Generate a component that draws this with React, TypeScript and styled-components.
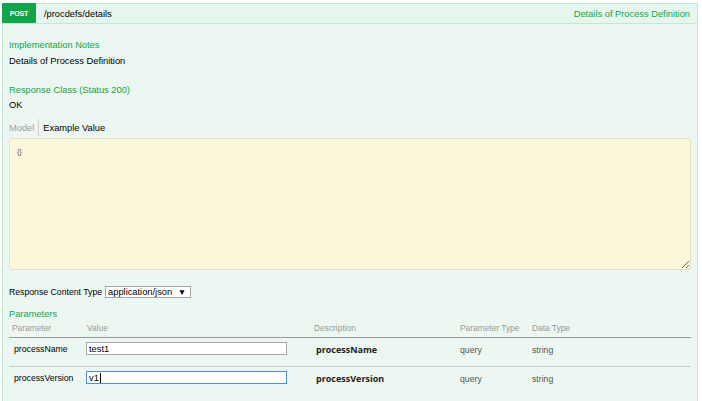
import styled, { createGlobalStyle } from "styled-components";

const GlobalStyle = createGlobalStyle`
  body {
    margin: 0;
    background: #ffffff;
    font-family: "Liberation Sans", Arial, sans-serif;
  }
`;

const Operation = styled.div`
  margin: 3px 4px 0 2px;
  width: 696px;
`;

const Heading = styled.div`
  display: flex;
  align-items: center;
  height: 19px;
  background: #e7f6ec;
  border: 1px solid #c3e8d1;
  border-left: none;
`;

const Method = styled.span`
  display: flex;
  align-items: center;
  justify-content: center;
  align-self: stretch;
  width: 34px;
  margin-top: -1px;
  background: #10a54a;
  color: #ffffff;
  font-size: 7px;
  font-weight: bold;
  letter-spacing: -0.2px;
  border-radius: 1px;
`;

const Path = styled.span`
  margin-left: 8px;
  font-size: 9.3px;
  color: #000000;
`;

const Summary = styled.span`
  margin-left: auto;
  margin-right: 7px;
  font-size: 9.3px;
  color: #10a54a;
`;

const Content = styled.div`
  background: #ebf7f0;
  border: 1px solid #c3e8d1;
  border-top: none;
  padding: 15px 6px 20px 6px;
  font-size: 9.3px;
  line-height: 12px;
  color: #000000;
`;

const SectionTitle = styled.h4<{ $top?: number; $bottom?: number }>`
  margin: ${(p) => p.$top ?? 0}px 0 ${(p) => p.$bottom ?? 4}px;
  font-size: 9.3px;
  line-height: 12px;
  font-weight: normal;
  color: #10a54a;
`;

const Text = styled.p`
  margin: 0;
`;

const Tabs = styled.div`
  display: flex;
  align-items: center;
  margin-top: 8px;
  height: 17px;
`;

const Tab = styled.span<{ $active?: boolean }>`
  display: flex;
  align-items: center;
  align-self: stretch;
  padding: 0 4px 0 0;
  color: ${(p) => (p.$active ? "#000000" : "#a0a0a0")};
  & + & {
    border-left: 1px solid #d0d0d0;
    padding-left: 4px;
  }
`;

const Sample = styled.textarea`
  display: block;
  box-sizing: border-box;
  width: 100%;
  height: 132px;
  margin-top: 2px;
  padding: 8px 7px;
  background: #fcf6db;
  border: 1px solid #e5e0c6;
  border-radius: 3px;
  font-family: "Liberation Sans", Arial, sans-serif;
  font-size: 8px;
  letter-spacing: -0.5px;
  color: #6b6b8a;
  outline: none;
`;

const ContentType = styled.div`
  display: flex;
  align-items: center;
  margin-top: 14px;
  height: 16px;
  font-size: 8.7px;
`;

const SelectBox = styled.span`
  display: inline-flex;
  align-items: center;
  justify-content: space-between;
  box-sizing: border-box;
  width: 86px;
  height: 12px;
  margin-left: 3px;
  padding: 0 4px 0 2px;
  background: #ffffff;
  border: 1px solid #a6a6a6;
  font-size: 9.3px;
  color: #000000;
`;

const Arrow = styled.span`
  font-size: 8.5px;
`;

const Table = styled.table`
  width: 100%;
  border-collapse: collapse;
  table-layout: fixed;
`;

const Th = styled.th`
  padding: 3px 0 3px 3px;
  text-align: left;
  font-weight: normal;
  font-size: 8.4px;
  line-height: 11px;
  color: #999999;
  border-bottom: 1px solid #999999;
`;

const Row = styled.tr<{ $last?: boolean }>`
  border-bottom: ${(p) => (p.$last ? "none" : "1px solid #cccccc")};
`;

const Td = styled.td<{ $pad?: number; $small?: boolean }>`
  box-sizing: border-box;
  height: 29px;
  padding: ${(p) => (p.$small ? 6 : 4)}px 0 0 ${(p) => p.$pad ?? 3}px;
  vertical-align: top;
  font-size: 8.7px;
  line-height: 12px;
  color: ${(p) => (p.$small ? "#555555" : "#000000")};
`;

const Name = styled.span`
  display: inline-block;
  padding-top: 1px;
`;

const InputBox = styled.div<{ $focus?: boolean }>`
  display: flex;
  align-items: center;
  box-sizing: border-box;
  width: 201px;
  height: 13px;
  margin-left: 2px;
  padding-left: 2px;
  background: #ffffff;
  border: 1px solid ${(p) => (p.$focus ? "#4a8fe0" : "#a9a9a9")};
  font-size: 9.3px;
  color: #000000;
`;

const Caret = styled.span`
  display: inline-block;
  width: 1px;
  height: 10px;
  margin-left: 1px;
  background: #000000;
`;

const Desc = styled.strong`
  display: inline-block;
  padding-top: 2px;
  font-family: "Open Sans", "DejaVu Sans", sans-serif;
  font-size: 9px;
  font-weight: bold;
  color: #222222;
`;

const params = [
  { name: "processName", value: "test1", focus: false },
  { name: "processVersion", value: "v1", focus: true },
];

const App = () => {
  return (
    <>
      <GlobalStyle />
      <Operation>
        <Heading>
          <Method>POST</Method>
          <Path>/procdefs/details</Path>
          <Summary>Details of Process Definition</Summary>
        </Heading>
        <Content>
          <SectionTitle>Implementation Notes</SectionTitle>
          <Text>Details of Process Definition</Text>
          <SectionTitle $top={17} $bottom={3}>
            Response Class (Status 200)
          </SectionTitle>
          <Text>OK</Text>
          <Tabs>
            <Tab>Model</Tab>
            <Tab $active>Example Value</Tab>
          </Tabs>
          <Sample readOnly value="{}" />
          <ContentType>
            Response Content Type
            <SelectBox>
              application/json <Arrow>▼</Arrow>
            </SelectBox>
          </ContentType>
          <SectionTitle $top={8} $bottom={0}>
            Parameters
          </SectionTitle>
          <Table>
            <colgroup>
              <col style={{ width: 75 }} />
              <col style={{ width: 227 }} />
              <col style={{ width: 146 }} />
              <col style={{ width: 72 }} />
              <col />
            </colgroup>
            <thead>
              <tr>
                <Th>Parameter</Th>
                <Th>Value</Th>
                <Th>Description</Th>
                <Th>Parameter Type</Th>
                <Th>Data Type</Th>
              </tr>
            </thead>
            <tbody>
              {params.map((p, i) => (
                <Row key={p.name} $last={i === params.length - 1}>
                  <Td $pad={5}>
                    <Name>{p.name}</Name>
                  </Td>
                  <Td $pad={0}>
                    <InputBox $focus={p.focus}>
                      {p.value}
                      {p.focus && <Caret />}
                    </InputBox>
                  </Td>
                  <Td $pad={5}>
                    <Desc>{p.name}</Desc>
                  </Td>
                  <Td $small>query</Td>
                  <Td $small>string</Td>
                </Row>
              ))}
            </tbody>
          </Table>
        </Content>
      </Operation>
    </>
  );
};

export default App;
